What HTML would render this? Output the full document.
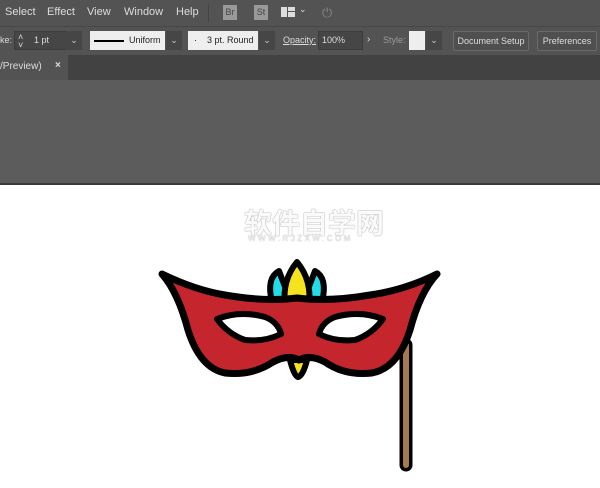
<!DOCTYPE html>
<html><head><meta charset="utf-8"><style>
*{margin:0;padding:0;box-sizing:border-box}
body{width:600px;height:488px;overflow:hidden;background:#fff;font-family:"Liberation Sans",sans-serif;position:relative}
.a{position:absolute;white-space:nowrap}
.t{color:#ddd;font-size:11px}
.box{position:absolute;background:#464646;border:1px solid #3c3c3c;height:19px;top:31px}
.lt{position:absolute;background:#eee;height:19px;top:31px;color:#222;font-size:9px;line-height:19px;white-space:nowrap;overflow:hidden}
.btn{position:absolute;top:31px;height:20px;border:1px solid #6a6a6a;border-radius:2px;color:#ddd;font-size:9px;line-height:18px;text-align:center;background:#4f4f4f;white-space:nowrap}
.chev{position:absolute;top:31px;width:16px;height:19px;background:#464646;color:#ccc;font-size:9px;text-align:center;line-height:19px}
</style></head><body>
<div class="a" style="left:0;top:0;width:600px;height:26px;background:#535353"></div>
<div class="a" style="left:0;top:26px;width:600px;height:29px;background:#535353;border-top:1px solid #474747"></div>
<div class="a t" style="left:5px;top:6px">Select</div>
<div class="a t" style="left:47px;top:6px">Effect</div>
<div class="a t" style="left:87px;top:6px">View</div>
<div class="a t" style="left:124px;top:6px">Window</div>
<div class="a t" style="left:176px;top:6px">Help</div>
<div class="a" style="left:208px;top:4px;width:1px;height:18px;background:#444"></div>
<div class="a" style="left:223px;top:5px;width:14px;height:15px;background:#999;color:#444;font-size:9px;line-height:15px;text-align:center">Br</div>
<div class="a" style="left:254px;top:5px;width:14px;height:15px;background:#999;color:#444;font-size:9px;line-height:15px;text-align:center">St</div>
<div class="a" style="left:281px;top:7px;width:6px;height:10px;background:#ddd"></div>
<div class="a" style="left:288px;top:7px;width:7px;height:4px;background:#ddd"></div>
<div class="a" style="left:288px;top:12px;width:7px;height:5px;background:#ddd"></div>
<div class="a t" style="left:299px;top:4px;font-size:9px">&#8964;</div>
<div class="a" style="left:322px;top:5px;color:#888;font-size:13px">⏻</div>
<div class="a t" style="left:0;top:35px;font-size:9px">ke:</div>
<div class="box" style="left:14px;width:60px"></div>
<div class="a t" style="left:18px;top:33px;font-size:9px;line-height:8px">˄<br>˅</div>
<div class="a t" style="left:34px;top:35px;font-size:9px">1 pt</div>
<div class="chev" style="left:66px">&#8964;</div>
<div class="lt" style="left:90px;width:75px"><span style="display:inline-block;width:30px;height:2px;background:#000;vertical-align:middle;margin:0 5px 0 4px"></span>Uniform</div>
<div class="chev" style="left:166px">&#8964;</div>
<div class="lt" style="left:188px;width:70px;padding-left:6px">·&nbsp;&nbsp;&nbsp;&nbsp;3 pt. Round</div>
<div class="chev" style="left:259px">&#8964;</div>
<div class="a t" style="left:283px;top:35px;font-size:9px;text-decoration:underline">Opacity:</div>
<div class="box" style="left:318px;width:45px"></div>
<div class="a t" style="left:322px;top:35px;font-size:9px">100%</div>
<div class="a t" style="left:367px;top:34px;font-size:10px">›</div>
<div class="a" style="left:383px;top:35px;font-size:9px;color:#999">Style:</div>
<div class="lt" style="left:409px;width:16px"></div>
<div class="chev" style="left:426px">&#8964;</div>
<div class="btn" style="left:453px;width:76px">Document Setup</div>
<div class="btn" style="left:537px;width:60px">Preferences</div>
<div class="a" style="left:0;top:55px;width:600px;height:25px;background:#424242"></div>
<div class="a" style="left:0;top:55px;width:68px;height:25px;background:#535353"></div>
<div class="a t" style="left:0;top:61px;font-size:10px">/Preview)</div>
<div class="a t" style="left:55px;top:60px;font-size:10px;font-weight:bold">×</div>
<div class="a" style="left:0;top:80px;width:600px;height:103px;background:#5c5c5c"></div>
<div class="a" style="left:0;top:183px;width:600px;height:2px;background:#3a3a3a"></div>
<div class="a" style="left:244px;top:202px;font-size:28px;color:#fafafa;font-weight:bold;font-family:'Liberation Sans','Noto Sans CJK SC',sans-serif;text-shadow:0 0 1px #999,0 0 1px #999">软件自学网</div>
<div class="a" style="left:248px;top:234px;font-size:8px;color:#eee;letter-spacing:2.5px;text-shadow:0 0 1px #999">WWW.RJZXW.COM</div>
<svg class="a" style="left:0;top:0" width="600" height="488">
<path d="M406 345 L406 465" stroke="#000" stroke-width="13" stroke-linecap="round"/>
<path d="M406 345 L406 465" stroke="#a57a52" stroke-width="6" stroke-linecap="round"/>
<g stroke="#000" stroke-width="6" stroke-linejoin="round">
<path d="M279 271 Q266 278 272 302 L291 302 Z" fill="#22dde8"/>
<path d="M315 271 Q328 278 322 302 L303 302 Z" fill="#22dde8"/>
<path d="M297 262 Q282 280 285 305 L309 305 Q312 280 297 262 Z" fill="#f7e21e"/>
<path d="M290 360 Q294 376 298 377 Q303 376 307 360 Z" fill="#f7e21e"/>
<path d="M162 274 Q195 290 225 295 Q265 302 297 298 Q330 302 370 295 Q405 290 437 274 Q420 292 410 330 Q398 368 372 373 Q345 376 325 362 Q310 354 299 360 Q288 354 273 362 Q252 376 225 373 Q200 368 188 330 Q178 292 162 274 Z" fill="#c5262e" stroke-width="7"/>
<path d="M217 319 Q240 310 265 317 Q278 322 281 334 Q265 342 245 340 Q228 334 217 319 Z" fill="#fff"/>
<path d="M383 319 Q360 310 335 317 Q322 322 319 334 Q335 342 355 340 Q372 334 383 319 Z" fill="#fff"/>
</g>
</svg>
</body></html>
